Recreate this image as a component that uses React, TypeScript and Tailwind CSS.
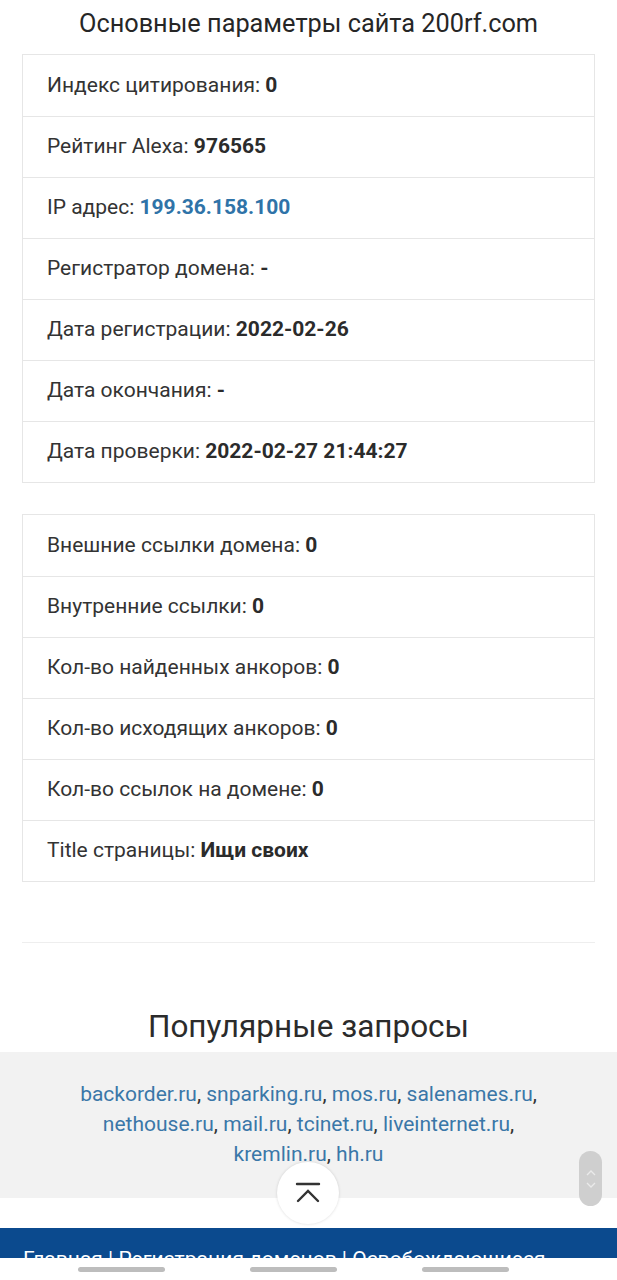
import React from 'react';

interface Param {
  label: string;
  value: string;
  link?: boolean;
}

const mainParams: Param[] = [
  { label: 'Индекс цитирования:', value: '0' },
  { label: 'Рейтинг Alexa:', value: '976565' },
  { label: 'IP адрес:', value: '199.36.158.100', link: true },
  { label: 'Регистратор домена:', value: '-' },
  { label: 'Дата регистрации:', value: '2022-02-26' },
  { label: 'Дата окончания:', value: '-' },
  { label: 'Дата проверки:', value: '2022-02-27 21:44:27' },
];

const linkParams: Param[] = [
  { label: 'Внешние ссылки домена:', value: '0' },
  { label: 'Внутренние ссылки:', value: '0' },
  { label: 'Кол-во найденных анкоров:', value: '0' },
  { label: 'Кол-во исходящих анкоров:', value: '0' },
  { label: 'Кол-во ссылок на домене:', value: '0' },
  { label: 'Title страницы:', value: 'Ищи своих' },
];

const popular = [
  'backorder.ru',
  'snparking.ru',
  'mos.ru',
  'salenames.ru',
  'nethouse.ru',
  'mail.ru',
  'tcinet.ru',
  'liveinternet.ru',
  'kremlin.ru',
  'hh.ru',
];

const ParamList: React.FC<{ items: Param[] }> = ({ items }) => (
  <ul className="border border-[#e6e6e6] bg-white">
    {items.map((item, i) => (
      <li
        key={i}
        className={`h-[61px] flex items-center pl-6 text-[21px] text-[#333] ${i > 0 ? 'border-t border-[#e6e6e6]' : ''}`}
      >
        <span>{item.label}&nbsp;</span>
        {item.link ? (
          <a className="font-bold text-[#2f73a8]">{item.value}</a>
        ) : (
          <b className="font-bold text-[#2b2b2b]">{item.value}</b>
        )}
      </li>
    ))}
  </ul>
);

export default function App() {
  return (
    <div className="relative h-[1280px] overflow-hidden bg-white font-['Roboto',sans-serif]">
      <div className="px-[22px]">
        <h1 className="h-[54px] pt-[7px] text-center text-[25.3px] font-normal leading-[34px] text-[#262626]">
          Основные параметры сайта 200rf.com
        </h1>
        <ParamList items={mainParams} />
        <div className="h-[31px]" />
        <ParamList items={linkParams} />
        <hr className="mt-[60px] border-t border-[#eeeeee]" />
      </div>

      <h2 className="mt-[64px] h-[45px] text-center text-[31.5px] leading-[40px] text-[#2b2b2b]">
        Популярные запросы
      </h2>

      <div className="h-[146px] bg-[#f2f2f2] px-[70px] pt-[27px] text-center text-[21px] leading-[30px] text-[#333]">
        {popular.map((site, i) => (
          <React.Fragment key={site}>
            <a className="text-[#3a77a8]">{site}</a>
            {i < popular.length - 1 ? ', ' : ''}
          </React.Fragment>
        ))}
      </div>

      <div className="h-[30px] bg-white" />

      <footer className="h-[60px] bg-[#0b4a8e] px-[23px] pt-[16px] text-[21px] leading-[30px] text-white whitespace-nowrap">
        Главная | Регистрация доменов | Освобождающиеся
      </footer>

      {/* scroll to top */}
      <button className="absolute left-[277px] top-[1162px] flex h-[62px] w-[62px] items-center justify-center rounded-full bg-white shadow-[0_0_3px_rgba(0,0,0,0.15)]">
        <svg width="28" height="24" viewBox="0 0 28 24" fill="none" stroke="#333" strokeWidth="2.4" strokeLinecap="round">
          <line x1="3" y1="3" x2="25" y2="3" />
          <polyline points="4,20 14,10 24,20" />
        </svg>
      </button>

      {/* scrollbar thumb */}
      <div className="absolute left-[579px] top-[1151px] flex h-[55px] w-[23px] flex-col items-center justify-center gap-[6px] rounded-full bg-[#cfcfcf]">
        <svg width="10" height="6" viewBox="0 0 10 6" fill="none" stroke="#eaeaea" strokeWidth="1.3">
          <polyline points="1,5 5,1 9,5" />
        </svg>
        <svg width="10" height="6" viewBox="0 0 10 6" fill="none" stroke="#eaeaea" strokeWidth="1.3">
          <polyline points="1,1 5,5 9,1" />
        </svg>
      </div>

      {/* bottom bar */}
      <div className="absolute bottom-0 left-0 right-0 flex h-[22px] items-center gap-[85px] bg-white pl-[78px]">
        <div className="h-[5px] w-[87px] rounded-full bg-[#bdbdbd]" />
        <div className="h-[5px] w-[87px] rounded-full bg-[#bdbdbd]" />
        <div className="h-[5px] w-[87px] rounded-full bg-[#bdbdbd]" />
      </div>
    </div>
  );
}
